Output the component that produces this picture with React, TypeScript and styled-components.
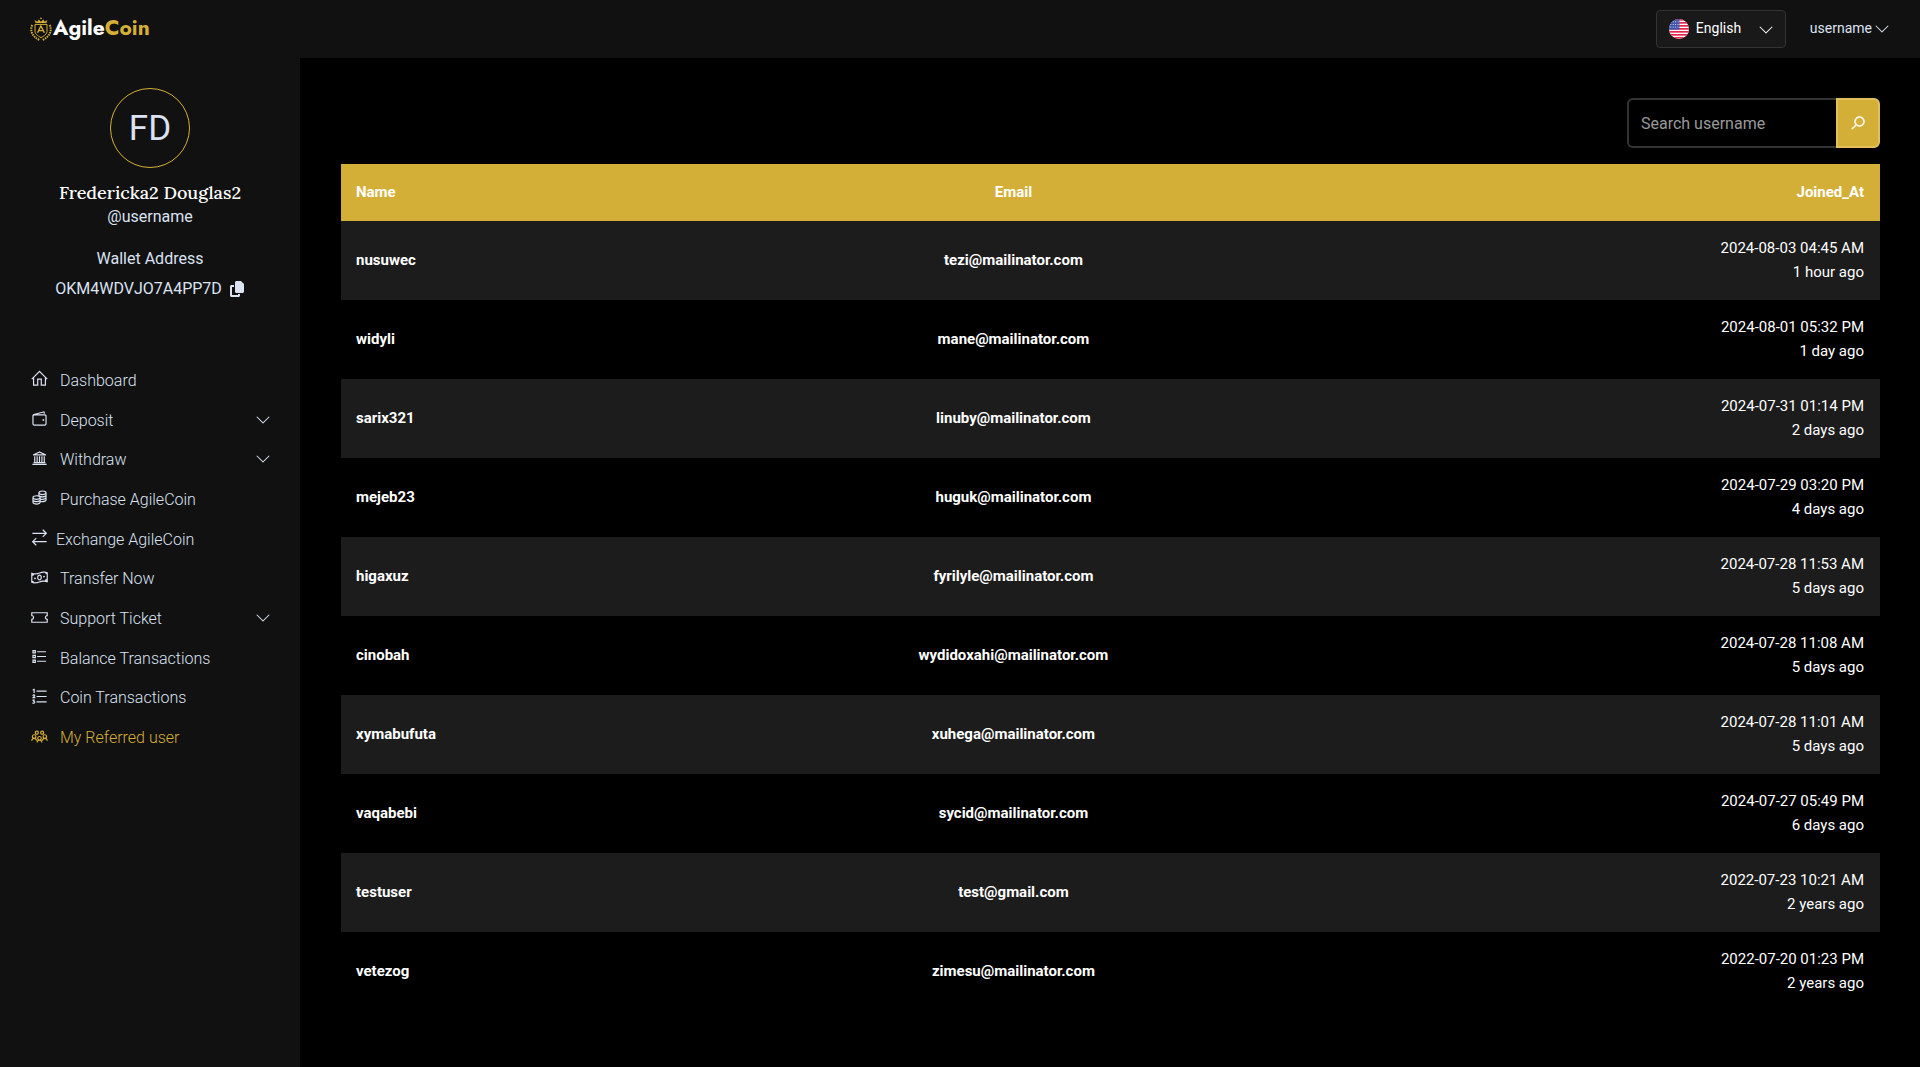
import React from 'react';
import styled, { createGlobalStyle } from 'styled-components';
import {
  LiaHomeSolid,
  LiaWalletSolid,
  LiaUniversitySolid,
  LiaCoinsSolid,
  LiaExchangeAltSolid,
  LiaMoneyBillWaveSolid,
  LiaTicketAltSolid,
  LiaListSolid,
  LiaListOlSolid,
  LiaUsersSolid,
  LiaAngleDownSolid,
  LiaSearchSolid,
} from 'react-icons/lia';
import { FaCopy } from 'react-icons/fa6';

const gold = '#d4af37';
const panel = '#111111';
const text = '#dbe2f1';

const GlobalStyle = createGlobalStyle`
  * { box-sizing: border-box; }
  body {
    margin: 0;
    background: #000;
    color: ${text};
    font-family: Roboto, "Liberation Sans", sans-serif;
    font-size: 16px;
    line-height: 24px;
  }
  button, input, select { font: inherit; color: inherit; }
  a { color: inherit; text-decoration: none; }
`;

const Header = styled.header`
  display: flex;
  align-items: center;
  justify-content: space-between;
  height: 58px;
  padding: 0 30px;
  background: ${panel};
`;

const Brand = styled.a`
  display: flex;
  align-items: center;
  gap: 1px;
  color: #fff;
  font-family: Jost, Lato, Roboto, sans-serif;
  font-size: 21px;
  font-weight: 700;
`;

const BrandName = styled.span`
  padding-bottom: 3px;
`;

const BrandAccent = styled.span`
  color: ${gold};
`;

const HeaderTools = styled.div`
  display: flex;
  align-items: center;
  gap: 24px;
`;

const Language = styled.label`
  display: grid;
  grid-template-columns: 20px 1fr;
  align-items: center;
  column-gap: 7px;
  width: 130px;
  height: 38px;
  padding: 0 11px 0 12px;
  border: 1px solid #333;
  border-radius: 4px;
  background: #191919;
  color: #fff;
`;

const SelectWrap = styled.span`
  display: grid;
  grid-template-columns: 1fr 16px;
  align-items: center;

  svg {
    grid-area: 1 / 2;
    pointer-events: none;
  }
`;

const LanguageSelect = styled.select`
  grid-area: 1 / 1 / 2 / 3;
  width: 100%;
  padding: 0 0 2px;
  border: 0;
  outline: 0;
  appearance: none;
  background: transparent;
  font-size: 14px;
`;

const UserButton = styled.button`
  display: flex;
  align-items: center;
  gap: 2px;
  padding: 0 0 2px;
  border: 0;
  background: none;
  font-size: 14px;
`;

const Body = styled.div`
  display: flex;
  min-height: calc(100vh - 58px);
`;

const Sidebar = styled.aside`
  flex: 0 0 300px;
  padding: 30px;
  background: ${panel};
`;

const Profile = styled.section`
  display: flex;
  flex-direction: column;
  align-items: center;
  margin-bottom: 60px;
`;

const Avatar = styled.div`
  display: flex;
  align-items: center;
  justify-content: center;
  width: 80px;
  height: 80px;
  padding-top: 2px;
  margin-bottom: 13px;
  border: 1px solid ${gold};
  border-radius: 50%;
  font-size: 35px;
`;

const FullName = styled.h1`
  margin: 0;
  color: #fff;
  font-family: Lora, "Liberation Serif", serif;
  font-size: 18px;
  font-weight: 500;
  line-height: 24px;
`;

const WalletLabel = styled.span`
  margin: 18px 0 6px;
`;

const WalletRow = styled.div`
  display: flex;
  align-items: center;
  gap: 7px;
`;

const CopyButton = styled.button`
  display: flex;
  padding: 0;
  border: 0;
  background: none;
`;

const NavList = styled.ul`
  display: grid;
  grid-auto-rows: 1fr;
  height: 397px;
  margin: 0;
  padding: 0;
  list-style: none;
`;

const NavLink = styled.a<{ $active?: boolean; $tight?: boolean }>`
  display: flex;
  align-items: center;
  gap: ${(p) => (p.$tight ? 7 : 11)}px;
  height: 100%;
  color: ${(p) => (p.$active ? gold : text)};
  font-weight: 300;
`;

const NavIcon = styled.span`
  display: flex;
  padding-bottom: 4px;
  font-size: 19px;
`;

const NavArrow = styled.span`
  display: flex;
  padding-bottom: 4px;
  margin-right: -1px;
  font-size: 16px;
`;

const NavText = styled.span`
  flex: 1;
`;

const Main = styled.main`
  flex: 1;
  min-width: 0;
  padding: 40px 40px 30px 41px;
`;

const SearchForm = styled.form`
  display: flex;
  width: 253px;
  height: 50px;
  margin: 0 0 16px auto;
`;

const SearchInput = styled.input`
  flex: 1;
  min-width: 0;
  padding: 2px 12px 0;
  border: 2px solid #333;
  border-right: 0;
  border-radius: 6px 0 0 6px;
  outline: 0;
  background: #000;

  &::placeholder {
    color: #999;
    opacity: 1;
  }
`;

const SearchButton = styled.button`
  display: flex;
  align-items: center;
  justify-content: center;
  width: 44px;
  padding: 0;
  border: 2px solid #e0c05c;
  border-radius: 0 6px 6px 0;
  background: ${gold};
  color: #fff;

  svg {
    stroke-width: 1;
  }
`;

const Table = styled.table`
  width: 100%;
  border-collapse: collapse;
  color: #fff;
  font-size: 15px;
`;

const HeadRow = styled.tr`
  background: ${gold};
`;

const Row = styled.tr`
  &:nth-child(odd) {
    background: #1c1c1c;
  }
`;

type Align = 'left' | 'center' | 'right';

const HeadCell = styled.th<{ $align: Align }>`
  padding: 16px 16px 17px 15px;
  font-weight: 700;
  text-align: ${(p) => p.$align};
`;

const Cell = styled.td<{ $align: Align; $strong?: boolean }>`
  padding: 15px 16px 16px 15px;
  font-weight: ${(p) => (p.$strong ? 700 : 400)};
  text-align: ${(p) => p.$align};
`;

const Ago = styled.span`
  display: block;
`;

function Crest() {
  return (
    <svg width="22" height="24" viewBox="0 0 22 24" fill="none" stroke={gold} aria-hidden="true">
      <path d="M5.6 6 4.6 3 7.4 4.8 8.6 2.4 11 4.8 13.4 2.4 14.6 4.8 17.4 3 16.4 6Z" fill={gold} stroke="none" />
      <circle cx="11" cy="1.4" r=".8" fill={gold} stroke="none" />
      <path d="M5 7.4h12v6.8c0 2.8-2.6 4.6-6 6.4-3.4-1.8-6-3.6-6-6.4Z" strokeWidth="1" />
      <path d="M7.6 15.8 10.9 9 14.4 15.8M8.8 13.6h4.4" strokeWidth="1.4" />
      <path d="M2.2 8C-.2 13.6 2 19.4 9.2 22.8M19.8 8c2.4 5.6.2 11.4-7 14.8" strokeWidth="2" strokeDasharray="1.5 .9" />
    </svg>
  );
}

function UsFlag() {
  return (
    <svg width="20" height="20" viewBox="0 0 20 20" aria-hidden="true">
      <clipPath id="flag-round">
        <circle cx="10" cy="10" r="10" />
      </clipPath>
      <g clipPath="url(#flag-round)">
        <rect width="20" height="20" fill="#fff" />
        {[0, 3, 6, 9, 12, 15, 18].map((y) => (
          <rect key={y} y={y} width="20" height="1.7" fill="#e3264a" />
        ))}
        <rect width="10.4" height="10.6" fill="#3c55ad" />
        {[2, 4.6, 7.2].map((y) =>
          [1.8, 4.2, 6.6, 9].map((x) => <circle key={`${x}-${y}`} cx={x} cy={y + 0.8} r=".5" fill="#fff" />),
        )}
      </g>
    </svg>
  );
}

const navItems = [
  { label: 'Dashboard', Icon: LiaHomeSolid },
  { label: 'Deposit', Icon: LiaWalletSolid, expandable: true },
  { label: 'Withdraw', Icon: LiaUniversitySolid, expandable: true },
  { label: 'Purchase AgileCoin', Icon: LiaCoinsSolid },
  { label: 'Exchange AgileCoin', Icon: LiaExchangeAltSolid, tight: true },
  { label: 'Transfer Now', Icon: LiaMoneyBillWaveSolid },
  { label: 'Support Ticket', Icon: LiaTicketAltSolid, expandable: true },
  { label: 'Balance Transactions', Icon: LiaListSolid },
  { label: 'Coin Transactions', Icon: LiaListOlSolid },
  { label: 'My Referred user', Icon: LiaUsersSolid, active: true },
];

const users = [
  ['nusuwec', 'tezi@mailinator.com', '2024-08-03 04:45 AM', '1 hour ago'],
  ['widyli', 'mane@mailinator.com', '2024-08-01 05:32 PM', '1 day ago'],
  ['sarix321', 'linuby@mailinator.com', '2024-07-31 01:14 PM', '2 days ago'],
  ['mejeb23', 'huguk@mailinator.com', '2024-07-29 03:20 PM', '4 days ago'],
  ['higaxuz', 'fyrilyle@mailinator.com', '2024-07-28 11:53 AM', '5 days ago'],
  ['cinobah', 'wydidoxahi@mailinator.com', '2024-07-28 11:08 AM', '5 days ago'],
  ['xymabufuta', 'xuhega@mailinator.com', '2024-07-28 11:01 AM', '5 days ago'],
  ['vaqabebi', 'sycid@mailinator.com', '2024-07-27 05:49 PM', '6 days ago'],
  ['testuser', 'test@gmail.com', '2022-07-23 10:21 AM', '2 years ago'],
  ['vetezog', 'zimesu@mailinator.com', '2022-07-20 01:23 PM', '2 years ago'],
];

export default function App() {
  return (
    <>
      <GlobalStyle />
      <Header>
        <Brand href="#">
          <Crest />
          <BrandName>
            Agile<BrandAccent>Coin</BrandAccent>
          </BrandName>
        </Brand>
        <HeaderTools>
          <Language>
            <UsFlag />
            <SelectWrap>
              <LanguageSelect aria-label="Language" defaultValue="en">
                <option value="en">English</option>
              </LanguageSelect>
              <LiaAngleDownSolid size={16} />
            </SelectWrap>
          </Language>
          <UserButton type="button">
            username
            <LiaAngleDownSolid size={16} />
          </UserButton>
        </HeaderTools>
      </Header>
      <Body>
        <Sidebar>
          <Profile>
            <Avatar>FD</Avatar>
            <FullName>Fredericka2 Douglas2</FullName>
            <span>@username</span>
            <WalletLabel>Wallet Address</WalletLabel>
            <WalletRow>
              <span>OKM4WDVJO7A4PP7D</span>
              <CopyButton type="button" aria-label="Copy wallet address">
                <FaCopy size={16} />
              </CopyButton>
            </WalletRow>
          </Profile>
          <nav>
            <NavList>
              {navItems.map(({ label, Icon, expandable, tight, active }) => (
                <li key={label}>
                  <NavLink href="#" $active={active} $tight={tight}>
                    <NavIcon>
                      <Icon />
                    </NavIcon>
                    <NavText>{label}</NavText>
                    {expandable && (
                      <NavArrow>
                        <LiaAngleDownSolid />
                      </NavArrow>
                    )}
                  </NavLink>
                </li>
              ))}
            </NavList>
          </nav>
        </Sidebar>
        <Main>
          <SearchForm role="search">
            <SearchInput type="text" placeholder="Search username" aria-label="Search username" />
            <SearchButton type="submit" aria-label="Search">
              <LiaSearchSolid size={16} />
            </SearchButton>
          </SearchForm>
          <Table>
            <thead>
              <HeadRow>
                <HeadCell $align="left">Name</HeadCell>
                <HeadCell $align="center">Email</HeadCell>
                <HeadCell $align="right">Joined_At</HeadCell>
              </HeadRow>
            </thead>
            <tbody>
              {users.map(([name, email, joined, ago]) => (
                <Row key={name}>
                  <Cell $align="left" $strong>{name}</Cell>
                  <Cell $align="center" $strong>{email}</Cell>
                  <Cell $align="right">
                    {joined}
                    <Ago>{ago}</Ago>
                  </Cell>
                </Row>
              ))}
            </tbody>
          </Table>
        </Main>
      </Body>
    </>
  );
}
